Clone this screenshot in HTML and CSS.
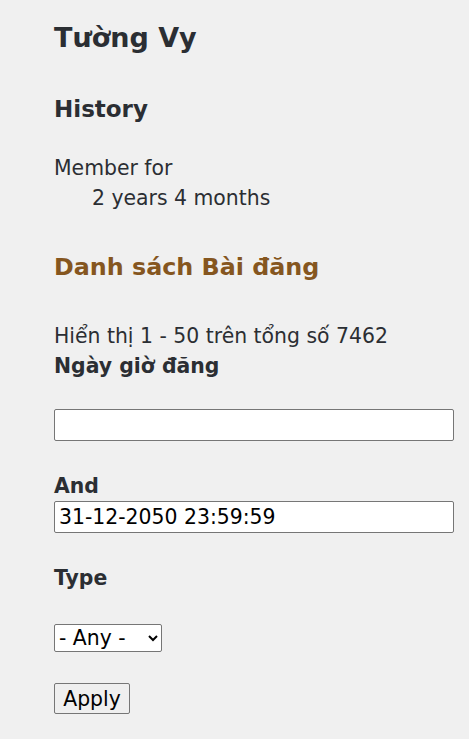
FILE: index.html
```html
<!DOCTYPE html>
<html lang="vi">
<head>
<meta charset="utf-8">
<link rel="stylesheet" href="styles.css">
</head>
<body>
<main class="page">
  <h1 class="title">Tường Vy</h1>
  <h2 class="section">History</h2>
  <dl class="history">
    <dt>Member for</dt>
    <dd>2 years 4 months</dd>
  </dl>
  <h2 class="posts">Danh sách Bài đăng</h2>
  <p class="count">Hiển thị 1 - 50 trên tổng số 7462</p>
  <form class="filters">
    <div class="field">
      <label class="label">Ngày giờ đăng</label>
      <input class="text first" type="text" value="">
    </div>
    <div class="field">
      <label class="label and">And</label>
      <input class="text" type="text" value="31-12-2050 23:59:59">
    </div>
    <div class="field">
      <label class="label type">Type</label>
      <select class="select"><option>- Any -</option></select>
    </div>
    <button class="apply" type="button">Apply</button>
  </form>
</main>
</body>
</html>
```

FILE: styles.css
```css
html, body {
  margin: 0;
  padding: 0;
  background: #f0f0f0;
}
body {
  font-family: "DejaVu Sans", Verdana, sans-serif;
  color: #2b2e33;
  font-size: 20.4px;
  line-height: 30px;
}
.page {
  padding: 18px 15px 0 54px;
}
.title {
  font-size: 27px;
  line-height: 40px;
  margin: 0;
}
.section {
  font-size: 23px;
  line-height: 30px;
  margin: 36px 0 0;
}
.history {
  margin: 29px 0 0;
}
.history dt { margin: 0; }
.history dd { margin: 0 0 0 38px; }
.posts {
  font-size: 23.8px;
  line-height: 30px;
  margin: 39px 0 0;
  color: #85561f;
}
.count {
  margin: 39px 0 0;
}
.filters {
  display: flex;
  flex-direction: column;
  align-items: flex-start;
}
.field {
  display: flex;
  flex-direction: column;
  align-items: flex-start;
}
.label {
  font-weight: bold;
}
.text {
  box-sizing: border-box;
  width: 400px;
  height: 32px;
  margin: 0;
  border: 1px solid #767676;
  border-radius: 2px;
  background: #fff;
  font-family: "DejaVu Sans", Verdana, sans-serif;
  font-size: 20.4px;
  color: #000;
  padding: 0 4px;
}
.text.first { margin-top: 28px; }
.and { margin-top: 30px; }
.type { margin-top: 30px; }
.select {
  margin-top: 31px;
  width: 108px;
  height: 28px;
  box-sizing: border-box;
  font-family: "DejaVu Sans", Verdana, sans-serif;
  font-size: 20.4px;
  color: #000;
  background: #fff;
  border: 1px solid #767676;
  border-radius: 2px;
}
.apply {
  margin-top: 31px;
  width: 76px;
  height: 31px;
  padding: 0;
  font-family: "DejaVu Sans", Verdana, sans-serif;
  font-size: 20.4px;
  color: #000;
  background: #efefef;
  border: 1px solid #767676;
  border-radius: 2px;
}
```
